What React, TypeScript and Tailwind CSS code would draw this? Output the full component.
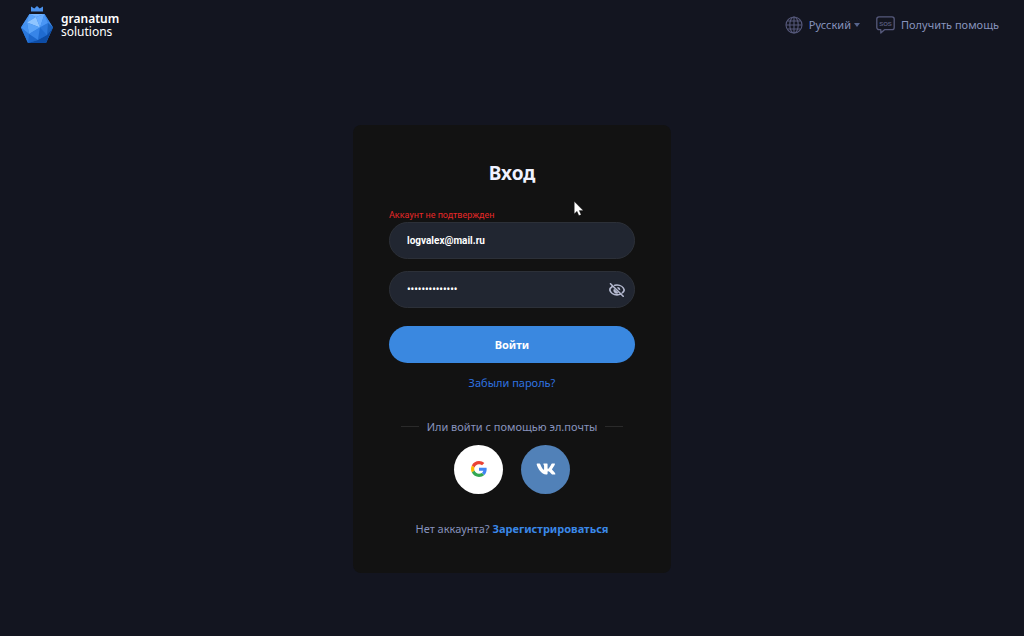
import React, { useState } from "react";
import { FaVk } from "react-icons/fa";

// --- ICONS ---
const Logo = () => (
  <svg width="34" height="38" viewBox="0 0 34 38" aria-hidden="true">
    <path d="M11 .5l3.300 2L17 0l2.700 2.500 3.300-2V5.500H11z" fill="#4a90ea" />
    <path d="M9.500 8h15L33 21.500 26 37H8L1 21.500z" fill="#2f7fe0" />
    <path d="M9.500 8L1 21.500l6-5z" fill="#4b94ee" />
    <path d="M9.500 8L16 11l-9 5.500z" fill="#5ba4fb" />
    <path d="M9.500 8h15L16 11z" fill="#74b4ff" />
    <path d="M16 11l-9 5.500 13 5z" fill="#8fc5ff" />
    <path d="M16 11l8.500-3L20 21.500z" fill="#69adff" />
    <path d="M24.500 8L28 17l-8 4.500z" fill="#4a96f5" />
    <path d="M24.500 8L33 21.500 28 17z" fill="#3c86e4" />
    <path d="M7 16.500l13 5L9 28z" fill="#5aa3f8" />
    <path d="M7 16.500l-6 5L9 28z" fill="#4592f0" />
    <path d="M20 21.500l8-4.500-1 12z" fill="#2c78dc" />
    <path d="M28 17l5 4.500-6 7.500z" fill="#1c63bf" />
    <path d="M20 21.500L9 28l9 6z" fill="#3785e8" />
    <path d="M20 21.500l7 7.500-9 5z" fill="#1f6bd0" />
    <path d="M1 21.500L9 28l-1 9z" fill="#2a77da" />
    <path d="M9 28l9 6-10 3z" fill="#1c67cc" />
    <path d="M18 34l9-5 6-7.500L26 37H8z" fill="#0d4ca5" />
  </svg>
);

const GlobeIcon = () => (
  <svg
    width="18"
    height="18"
    viewBox="0 0 18 18"
    fill="none"
    stroke="#56597b"
    strokeWidth="1.1"
    aria-hidden="true"
  >
    <circle cx="9" cy="9" r="8" />
    <ellipse cx="9" cy="9" rx="4.2" ry="8" />
    <path d="M9 1v16M1 9h16M2.500 5h13M2.500 13h13" />
  </svg>
);

const SosIcon = () => (
  <svg
    width="19"
    height="18"
    viewBox="0 0 19 18"
    fill="none"
    stroke="#56597b"
    aria-hidden="true"
  >
    <path
      d="M3 .8h13a2.200 2.200 0 0 1 2.200 2.200v8.500a2.200 2.200 0 0 1-2.200 2.200H8.500L4.800 17v-3.300H3a2.200 2.200 0 0 1-2.200-2.200V3A2.200 2.200 0 0 1 3 .8z"
      strokeWidth="1.3"
      strokeLinejoin="round"
    />
    <text
      x="9.5"
      y="9.5"
      textAnchor="middle"
      fill="#56597b"
      stroke="none"
      fontSize="6"
      fontWeight="700"
      fontFamily="Liberation Sans, sans-serif"
    >
      SOS
    </text>
  </svg>
);

const EyeOffIcon = () => (
  <svg
    width="16"
    height="14"
    viewBox="0 0 16 14"
    fill="none"
    stroke="#b4b9cf"
    strokeWidth="1.6"
    strokeLinecap="round"
    aria-hidden="true"
  >
    <path d="M3.600 3.200C2 4.200.9 5.800.8 7c.6 2.600 3.500 4.900 7.200 4.900 1.500 0 2.900-.4 4-1" />
    <path d="M5.800 2.300C6.500 2.100 7.200 2 8 2c3.700 0 6.600 2.400 7.200 5-.2.900-.8 1.900-1.700 2.700" />
    <path
      d="M4.900 5.600A3.300 3.300 0 0 0 9.600 10zM8.200 3.900a3.200 3.200 0 0 1 3.100 3.300L9.900 6.700 8.600 5.600z"
      fill="#b4b9cf"
      stroke="none"
    />
    <path d="M1.500.8l12.700 12.400" />
  </svg>
);

const GoogleIcon = () => (
  <svg width="16" height="16" viewBox="0 0 48 48" aria-hidden="true">
    <path
      fill="#EA4335"
      d="M24 9.5c3.540 0 6.710 1.220 9.210 3.600l6.850-6.850C35.900 2.380 30.470 0 24 0 14.620 0 6.510 5.380 2.560 13.220l7.980 6.190C12.430 13.720 17.740 9.500 24 9.500z"
    />
    <path
      fill="#4285F4"
      d="M46.980 24.550c0-1.570-.15-3.090-.38-4.550H24v9.020h12.940c-.58 2.960-2.260 5.480-4.780 7.180l7.730 6c4.510-4.180 7.090-10.360 7.090-17.650z"
    />
    <path
      fill="#FBBC05"
      d="M10.530 28.590c-.48-1.450-.76-2.990-.76-4.590s.27-3.140.76-4.590l-7.980-6.190C.92 16.460 0 20.120 0 24c0 3.880.92 7.540 2.560 10.780l7.970-6.190z"
    />
    <path
      fill="#34A853"
      d="M24 48c6.480 0 11.930-2.130 15.890-5.810l-7.730-6c-2.150 1.450-4.920 2.300-8.160 2.300-6.260 0-11.570-4.220-13.470-9.910l-7.980 6.190C6.510 42.620 14.620 48 24 48z"
    />
  </svg>
);

const Pointer = () => (
  <svg
    width="10"
    height="15"
    viewBox="0 0 10 15"
    className="absolute left-[221px] top-[76px]"
    aria-hidden="true"
  >
    <path
      d="M.3.500v12.200l2.700-2.400 1.900 4.300 2.200-.9-1.900-4.100h4z"
      fill="#fff"
      stroke="#111"
      strokeWidth=".3"
    />
  </svg>
);

const fieldClass =
  "h-[37px] w-full rounded-full border border-[#2c3038] bg-[#212631] pl-[17px] font-['Roboto',sans-serif] text-[10px] font-bold text-white outline-none";

export default function App() {
  const [email, setEmail] = useState("logvalex@mail.ru");
  const [password, setPassword] = useState("password123456");
  const [visible, setVisible] = useState(false);

  return (
    <div className="flex min-h-screen flex-col bg-[#131520] font-['Noto_Sans',sans-serif] text-[11px] text-[#8793bd]">
      {/* --- HEADER --- */}
      <header className="flex items-center justify-between pt-[6px] pr-[25px] pb-[18px] pl-5">
        <a href="#" className="flex items-center gap-[7px] text-white">
          <Logo />
          <span className="text-[12px] leading-[13px]">
            <b className="block font-semibold">granatum</b>
            solutions
          </span>
        </a>
        <nav className="flex items-center gap-4">
          <button type="button" className="flex items-center gap-[6px]">
            <GlobeIcon />
            <span>Русский</span>
            <span className="-ml-[3px] border-x-[3px] border-t-[4px] border-x-transparent border-t-[#56648c]" />
          </button>
          <a href="#" className="flex items-center gap-[6px]">
            <SosIcon />
            Получить помощь
          </a>
        </nav>
      </header>

      {/* --- LOGIN CARD --- */}
      <main className="flex flex-1 items-center justify-center">
        <div className="relative w-[318px] rounded-lg bg-[#121212] px-9 pt-9 pb-9 text-center">
          <h1 className="text-[19px] leading-6 font-bold text-[#f0f2ff]">
            Вход
          </h1>
          <form
            className="mt-6 flex flex-col"
            onSubmit={(e) => e.preventDefault()}
          >
            <p
              id="email-error"
              className="text-left font-['Roboto',sans-serif] text-[9px] leading-[13px] text-[#e82828]"
            >
              Аккаунт не подтвержден
            </p>
            <input
              type="email"
              aria-label="Эл. почта"
              aria-describedby="email-error"
              value={email}
              onChange={(e) => setEmail(e.target.value)}
              className={fieldClass}
            />
            <div className="relative mt-3">
              <input
                type={visible ? "text" : "password"}
                aria-label="Пароль"
                value={password}
                onChange={(e) => setPassword(e.target.value)}
                className={fieldClass}
              />
              <button
                type="button"
                aria-label="Показать пароль"
                onClick={() => setVisible(!visible)}
                className="absolute inset-y-0 right-[10px] flex items-center"
              >
                <EyeOffIcon />
              </button>
            </div>
            <button
              type="submit"
              className="mt-[18px] h-[37px] rounded-full bg-[#3a88e0] font-bold text-white"
            >
              Войти
            </button>
          </form>
          <a
            href="#"
            className="mt-3 inline-block leading-4 text-[#2f73e0]"
          >
            Забыли пароль?
          </a>

          <div className="mt-[27px] flex items-center justify-center gap-2 leading-4">
            <span className="h-px w-[18px] bg-[#2a2a2a]" />
            Или войти с помощью эл.почты
            <span className="h-px w-[18px] bg-[#2a2a2a]" />
          </div>
          <div className="mt-[10px] flex justify-center gap-[18px]">
            <button
              type="button"
              aria-label="Google"
              className="flex size-[49px] items-center justify-center rounded-full bg-white"
            >
              <GoogleIcon />
            </button>
            <button
              type="button"
              aria-label="VK"
              className="flex size-[49px] items-center justify-center rounded-full bg-[#5181b8] text-white"
            >
              <FaVk size={20} />
            </button>
          </div>

          <p className="mt-[27px] leading-4">
            Нет аккаунта?{" "}
            <a href="#" className="font-bold text-[#3a88e8]">
              Зарегистрироваться
            </a>
          </p>
          <Pointer />
        </div>
      </main>
    </div>
  );
}
